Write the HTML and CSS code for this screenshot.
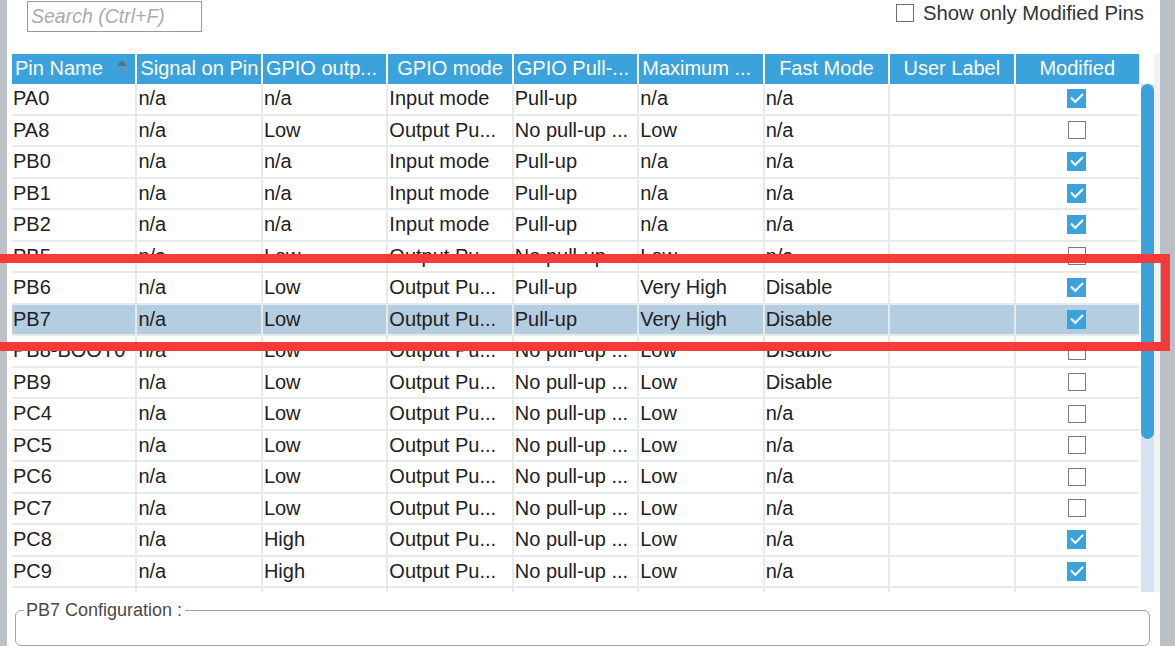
FILE: index.html
```html
<!DOCTYPE html>
<html>
<head>
<meta charset="utf-8">
<link rel="stylesheet" href="styles.css">
</head>
<body>
<div class="frame">
  <div class="main">
    <div class="toolbar">
      <div class="search">Search (Ctrl+F)</div>
      <label class="show-mod"><span class="cb"></span>Show only Modified Pins</label>
    </div>
    <div class="table-wrap">
      <div class="table">
        <div class="head">
          <div class="hc left">Pin Name<svg class="sort" width="14" height="22" viewBox="0 0 14 22"><path d="M2 9 L7 3 L12 9 Z" fill="#5a6e7c"/><path d="M2 12 L7 18 L12 12 Z" fill="#5d93bb"/></svg></div>
          <div class="hc left">Signal on Pin</div>
          <div class="hc left">GPIO outp...</div>
          <div class="hc">GPIO mode</div>
          <div class="hc left">GPIO Pull-...</div>
          <div class="hc left">Maximum ...</div>
          <div class="hc">Fast Mode</div>
          <div class="hc">User Label</div>
          <div class="hc">Modified</div>
        </div>
        <div class="body">
          <div class="row"><div class="c">PA0</div><div class="c">n/a</div><div class="c">n/a</div><div class="c">Input mode</div><div class="c">Pull-up</div><div class="c">n/a</div><div class="c">n/a</div><div class="c"></div><div class="c mod"><span class="chk on"></span></div></div>
          <div class="row"><div class="c">PA8</div><div class="c">n/a</div><div class="c">Low</div><div class="c">Output Pu...</div><div class="c">No pull-up ...</div><div class="c">Low</div><div class="c">n/a</div><div class="c"></div><div class="c mod"><span class="chk"></span></div></div>
          <div class="row"><div class="c">PB0</div><div class="c">n/a</div><div class="c">n/a</div><div class="c">Input mode</div><div class="c">Pull-up</div><div class="c">n/a</div><div class="c">n/a</div><div class="c"></div><div class="c mod"><span class="chk on"></span></div></div>
          <div class="row"><div class="c">PB1</div><div class="c">n/a</div><div class="c">n/a</div><div class="c">Input mode</div><div class="c">Pull-up</div><div class="c">n/a</div><div class="c">n/a</div><div class="c"></div><div class="c mod"><span class="chk on"></span></div></div>
          <div class="row"><div class="c">PB2</div><div class="c">n/a</div><div class="c">n/a</div><div class="c">Input mode</div><div class="c">Pull-up</div><div class="c">n/a</div><div class="c">n/a</div><div class="c"></div><div class="c mod"><span class="chk on"></span></div></div>
          <div class="row"><div class="c">PB5</div><div class="c">n/a</div><div class="c">Low</div><div class="c">Output Pu...</div><div class="c">No pull-up ...</div><div class="c">Low</div><div class="c">n/a</div><div class="c"></div><div class="c mod"><span class="chk"></span></div></div>
          <div class="row"><div class="c">PB6</div><div class="c">n/a</div><div class="c">Low</div><div class="c">Output Pu...</div><div class="c">Pull-up</div><div class="c">Very High</div><div class="c">Disable</div><div class="c"></div><div class="c mod"><span class="chk on"></span></div></div>
          <div class="row sel"><div class="c">PB7</div><div class="c">n/a</div><div class="c">Low</div><div class="c">Output Pu...</div><div class="c">Pull-up</div><div class="c">Very High</div><div class="c">Disable</div><div class="c"></div><div class="c mod"><span class="chk on"></span></div></div>
          <div class="row"><div class="c">PB8-BOOT0</div><div class="c">n/a</div><div class="c">Low</div><div class="c">Output Pu...</div><div class="c">No pull-up ...</div><div class="c">Low</div><div class="c">Disable</div><div class="c"></div><div class="c mod"><span class="chk"></span></div></div>
          <div class="row"><div class="c">PB9</div><div class="c">n/a</div><div class="c">Low</div><div class="c">Output Pu...</div><div class="c">No pull-up ...</div><div class="c">Low</div><div class="c">Disable</div><div class="c"></div><div class="c mod"><span class="chk"></span></div></div>
          <div class="row"><div class="c">PC4</div><div class="c">n/a</div><div class="c">Low</div><div class="c">Output Pu...</div><div class="c">No pull-up ...</div><div class="c">Low</div><div class="c">n/a</div><div class="c"></div><div class="c mod"><span class="chk"></span></div></div>
          <div class="row"><div class="c">PC5</div><div class="c">n/a</div><div class="c">Low</div><div class="c">Output Pu...</div><div class="c">No pull-up ...</div><div class="c">Low</div><div class="c">n/a</div><div class="c"></div><div class="c mod"><span class="chk"></span></div></div>
          <div class="row"><div class="c">PC6</div><div class="c">n/a</div><div class="c">Low</div><div class="c">Output Pu...</div><div class="c">No pull-up ...</div><div class="c">Low</div><div class="c">n/a</div><div class="c"></div><div class="c mod"><span class="chk"></span></div></div>
          <div class="row"><div class="c">PC7</div><div class="c">n/a</div><div class="c">Low</div><div class="c">Output Pu...</div><div class="c">No pull-up ...</div><div class="c">Low</div><div class="c">n/a</div><div class="c"></div><div class="c mod"><span class="chk"></span></div></div>
          <div class="row"><div class="c">PC8</div><div class="c">n/a</div><div class="c">High</div><div class="c">Output Pu...</div><div class="c">No pull-up ...</div><div class="c">Low</div><div class="c">n/a</div><div class="c"></div><div class="c mod"><span class="chk on"></span></div></div>
          <div class="row"><div class="c">PC9</div><div class="c">n/a</div><div class="c">High</div><div class="c">Output Pu...</div><div class="c">No pull-up ...</div><div class="c">Low</div><div class="c">n/a</div><div class="c"></div><div class="c mod"><span class="chk on"></span></div></div>
          <div class="row tail"><div class="c"></div><div class="c"></div><div class="c"></div><div class="c"></div><div class="c"></div><div class="c"></div><div class="c"></div><div class="c"></div><div class="c"></div></div>
        </div>
      </div>
      <div class="vscroll"><div class="thumb"></div></div>
      <div class="gutter"></div>
    </div>
    <fieldset class="config">
      <legend>PB7 Configuration :</legend>
    </fieldset>
  </div>
  <div class="highlight"></div>
</div>
</body>
</html>
```

FILE: styles.css
```css
* { box-sizing: border-box; }
html, body {
  margin: 0;
  padding: 0;
  width: 1175px;
  height: 646px;
  overflow: hidden;
  background: #ffffff;
  font-family: "Liberation Sans", Arial, Helvetica, sans-serif;
  color: #222;
}
.frame {
  position: relative;
  display: flex;
  width: 1175px;
  height: 646px;
  border-left: 7px solid #bcc2c7;
  border-right: 15px solid #b9c0c6;
  background: #fff;
}
.main {
  flex: 1;
  display: flex;
  flex-direction: column;
  min-width: 0;
}
.toolbar {
  height: 54px;
  flex: none;
  display: flex;
  align-items: flex-start;
  justify-content: space-between;
  padding: 1px 16px 0 20px;
}
.search {
  width: 175px;
  height: 31px;
  border: 1px solid #9a9a9a;
  color: #ababab;
  font-style: italic;
  font-size: 19.5px;
  line-height: 29px;
  padding-left: 3px;
}
.show-mod {
  display: flex;
  align-items: center;
  font-size: 20.3px;
  color: #333;
  height: 22px;
  margin-top: 1px;
}
.show-mod .cb {
  width: 18px;
  height: 18px;
  border: 1.5px solid #6f6f6f;
  margin-right: 9px;
  background: #fff;
}
.table-wrap {
  display: flex;
  padding-left: 5px;
  height: 538px;
  flex: none;
}
.table {
  width: 1127px;
  flex: none;
}
.head {
  display: grid;
  grid-template-columns: repeat(9, 1fr);
  column-gap: 2px;
  height: 30px;
  background: #fff;
}
.hc {
  background: #3ba2db;
  color: #fff;
  font-size: 20px;
  line-height: 29px;
  text-align: center;
  white-space: nowrap;
  overflow: hidden;
  position: relative;
}
.hc.left {
  text-align: left;
  padding-left: 3px;
}
.hc .sort {
  position: absolute;
  right: 6px;
  top: 3px;
}
.body {
  display: grid;
  row-gap: 2px;
  background: #e6eaea;
}
.row {
  display: grid;
  grid-template-columns: repeat(9, 1fr);
  column-gap: 2px;
  height: 29.5px;
}
.row.tail { height: 4px; }
.c {
  background: #fff;
  font-size: 20px;
  line-height: 29.5px;
  padding-left: 1px;
  white-space: nowrap;
  overflow: hidden;
}
.row.sel .c { background: #b5cde1; }
.c.mod {
  display: flex;
  align-items: center;
  justify-content: center;
  padding-left: 0;
  padding-right: 1px;
}
.chk {
  width: 18px;
  height: 18px;
  border: 1.5px solid #7a7a7a;
  background: #fff;
  display: block;
}
.chk.on {
  width: 19px;
  height: 19px;
  border: none;
  background: #3ba2db;
  position: relative;
}
.chk.on::after {
  content: "";
  position: absolute;
  left: 4px;
  top: 4px;
  width: 10px;
  height: 5px;
  border-left: 2px solid #fff;
  border-bottom: 2px solid #fff;
  transform: rotate(-45deg);
  transform-origin: center;
}
.vscroll {
  margin-left: 2px;
  margin-top: 30px;
  width: 13px;
  height: 508px;
  background: #d4e4f2;
  flex: none;
}
.thumb {
  height: 355px;
  background: #3ba2db;
  border-radius: 7px;
}
.gutter {
  flex: 1;
  background: #f2f2f2;
}
.config {
  margin: 8px 3px 0 8px;
  margin-right: 3px;
  border: 1px solid #9fa3a6;
  border-radius: 6px;
  padding: 0;
  flex: 1;
  min-width: 0;
  width: 1135px;
}
.config legend {
  font-size: 18px;
  color: #4a4a4a;
  padding: 0 3px 0 2px;
  margin-left: 8px;
  line-height: 20px;
}
.highlight {
  position: absolute;
  left: -27px;
  top: 254px;
  width: 1190px;
  height: 97px;
  border: 9px solid #f53a3a;
  pointer-events: none;
}
```
